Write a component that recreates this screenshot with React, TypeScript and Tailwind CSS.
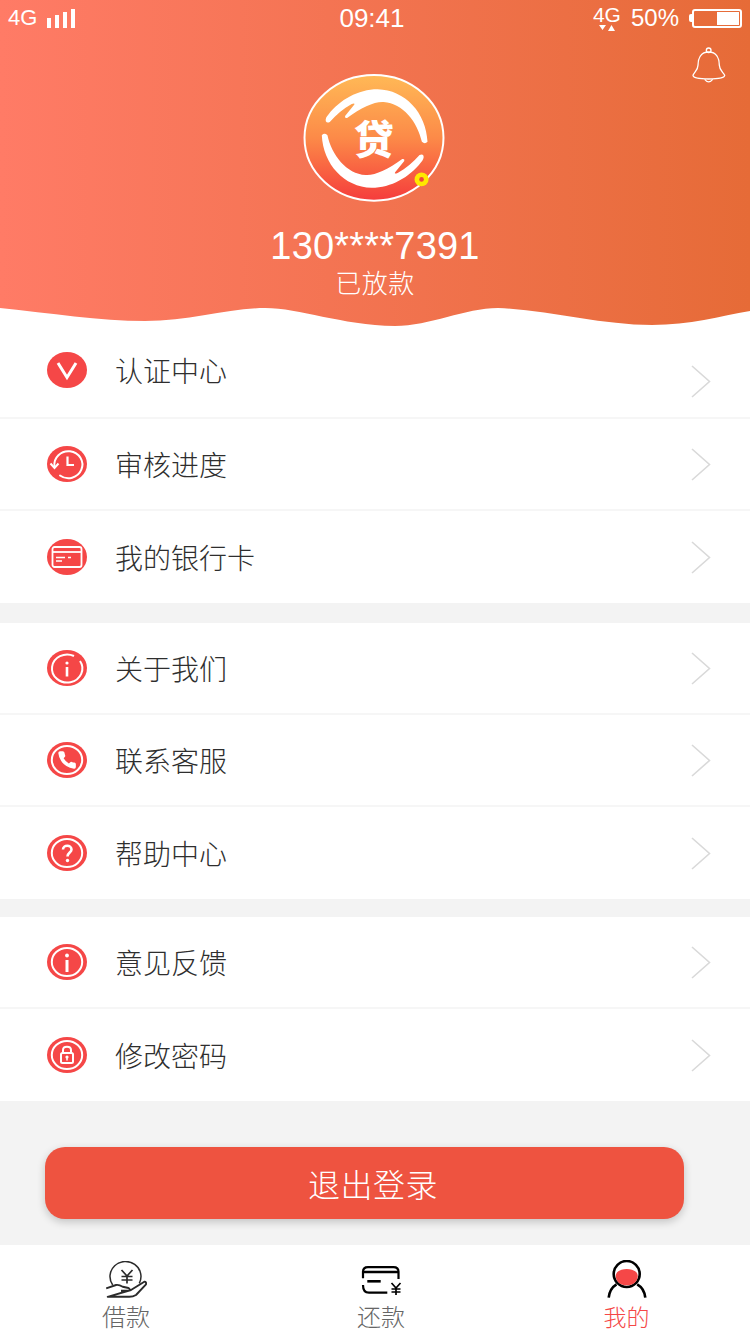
const CJK = "font-['Noto_Sans_CJK_SC','Liberation_Sans',sans-serif]";
const LATIN = "font-['Liberation_Sans','Noto_Sans_CJK_SC',sans-serif]";

function IconBase({ children }: { children: React.ReactNode }) {
  return (
    <svg width="40" height="36" viewBox="0 0 40 36" fill="none" className="shrink-0">
      <ellipse cx="20" cy="18" rx="20" ry="18" fill="#f54747" />
      {children}
    </svg>
  );
}

function VerifyIcon() {
  return (
    <IconBase>
      <path d="M11 11 L20 25.5 L29 11" stroke="#fff" strokeWidth="3" />
    </IconBase>
  );
}

function ProgressIcon() {
  return (
    <IconBase>
      <path d="M7.5 20.5 A14 13.5 0 1 1 13 29.5" stroke="#fff" strokeWidth="2" strokeLinecap="round" />
      <path d="M3.5 17.5 L7.5 22 L11.5 17.5" stroke="#fff" strokeWidth="2" />
      <path d="M20.5 10.5 V19 H27" stroke="#fff" strokeWidth="2.2" />
    </IconBase>
  );
}

function CardIcon() {
  return (
    <IconBase>
      <rect x="5.5" y="8" width="29" height="20" rx="2" stroke="#fff" strokeWidth="1.8" />
      <path d="M5.5 13 H34.5" stroke="#fff" strokeWidth="1.8" />
      <path d="M9 18.5 H18 M9 22 H15 M21 18.5 H24" stroke="#fff" strokeWidth="1.4" />
    </IconBase>
  );
}

function AboutIcon() {
  return (
    <IconBase>
      <path d="M27 6 A15.2 14 0 1 0 33 11" stroke="#fff" strokeWidth="2" />
      <circle cx="20" cy="13" r="1.6" fill="#fff" />
      <path d="M20 17 V26.5" stroke="#fff" strokeWidth="2.6" />
    </IconBase>
  );
}

function FeedbackIcon() {
  return (
    <IconBase>
      <ellipse cx="20" cy="18" rx="15.2" ry="14" stroke="#fff" strokeWidth="2" />
      <circle cx="20" cy="11.5" r="1.9" fill="#fff" />
      <path d="M20 16 V28" stroke="#fff" strokeWidth="3" />
    </IconBase>
  );
}

function PhoneIcon() {
  return (
    <IconBase>
      <ellipse cx="20" cy="18" rx="15.2" ry="14" stroke="#fff" strokeWidth="2" />
      <g transform="translate(9.5 7.5) scale(0.88)">
        <path
          d="M22 16.92v3a2 2 0 0 1-2.18 2 19.79 19.79 0 0 1-8.63-3.07 19.5 19.5 0 0 1-6-6 19.79 19.79 0 0 1-3.07-8.67A2 2 0 0 1 4.11 2h3a2 2 0 0 1 2 1.72 12.84 12.84 0 0 0 .7 2.81 2 2 0 0 1-.45 2.11L8.09 9.91a16 16 0 0 0 6 6l1.27-1.27a2 2 0 0 1 2.11-.45 12.84 12.84 0 0 0 2.81.7A2 2 0 0 1 22 16.92z"
          fill="#fff"
        />
      </g>
    </IconBase>
  );
}

function HelpIcon() {
  return (
    <IconBase>
      <ellipse cx="20" cy="18" rx="15.2" ry="14" stroke="#fff" strokeWidth="2" />
      <path d="M16 14.5 C16 9.5 24.5 9.5 24.5 14.5 C24.5 17.5 20.5 17.5 20.5 21.5" stroke="#fff" strokeWidth="2.6" />
      <circle cx="20.5" cy="25.5" r="1.7" fill="#fff" />
    </IconBase>
  );
}

function LockIcon() {
  return (
    <IconBase>
      <ellipse cx="20" cy="18" rx="15.2" ry="14" stroke="#fff" strokeWidth="2" />
      <path d="M16 16 V13 C16 8.5 24 8.5 24 13 V16" stroke="#fff" strokeWidth="2" />
      <rect x="14" y="16" width="12" height="10" rx="1.5" stroke="#fff" strokeWidth="2" />
      <circle cx="20" cy="20" r="1.6" fill="#fff" />
      <path d="M20 20 V23.5" stroke="#fff" strokeWidth="1.5" />
    </IconBase>
  );
}

function Logo() {
  const hand =
    "M108 170 Q106 160 116 150 C150 106 205 74 264 74 C347 76 410 145 414 232 Q406 240 397 232 C384 172 340 116 282 112 C255 110 215 128 172 160 Q164 162 166 154 L194 120 Q196 114 186 118 C160 132 140 150 120 172 Q112 177 108 170 Z";
  return (
    <svg width="142" height="128" viewBox="40 28 426 385">
      <defs>
        <linearGradient id="logoFill" x1="0" y1="0" x2="0" y2="1">
          <stop offset="0" stopColor="#ffb956" />
          <stop offset="0.5" stopColor="#fc8a48" />
          <stop offset="1" stopColor="#f53c3c" />
        </linearGradient>
      </defs>
      <ellipse cx="253" cy="220" rx="209" ry="189" fill="url(#logoFill)" stroke="#fff" strokeWidth="6" />
      <path d={hand} fill="#fff" />
      <path d={hand} fill="#fff" transform="rotate(180 255 222)" />
      <text
        x="252"
        y="270"
        textAnchor="middle"
        fontSize="120"
        fontWeight="900"
        fill="#fff"
        fontFamily="'Noto Sans CJK SC', sans-serif"
      >
        贷
      </text>
      <circle cx="396" cy="345" r="21" fill="#ffe900" />
      <circle cx="396" cy="345" r="7" fill="#f0483c" />
    </svg>
  );
}

function Bell() {
  return (
    <svg width="34" height="36" viewBox="950 140 102 108" fill="none" stroke="#fff" strokeWidth="4">
      <path d="M1000 155 C976 155 968 175 968 195 C968 210 956 216 953 225 C953 232 970 236 1000 236 C1030 236 1048 232 1048 225 C1044 216 1032 210 1032 195 C1032 175 1024 155 1000 155 Z" />
      <circle cx="1000" cy="150" r="7" />
      <path d="M988 237 Q1000 252 1012 237" />
    </svg>
  );
}

function BorrowIcon() {
  return (
    <svg width="42" height="38" viewBox="0 0 42 38" fill="none" stroke="#2b2b2b" strokeWidth="1.5">
      <path d="M7.7 24 A15.5 15 0 1 1 34.3 22.3" />
      <path d="M16.5 9 L22 15 L27.5 9 M22 15 V22.5 M16.5 15.5 H27.5 M16.5 19 H27.5" strokeWidth="1.7" />
      <path
        d="M1.2 27.3 L11 24 Q14 23.5 17.7 25.7 L23.5 27 Q25.5 28 24 29.7 H16 M26 29 L39.3 20.7 Q41.5 20.5 41 23.3 L31 34 Q28 35.8 24.3 35.8 H2.7 Z"
        strokeWidth="1.9"
        strokeLinejoin="round"
      />
    </svg>
  );
}

function RepayIcon() {
  return (
    <svg width="41" height="30" viewBox="0 0 41 30" fill="none" stroke="#000" strokeWidth="2.2">
      <path d="M2 12.3 V6 Q2 1.2 7 1.2 H32.5 Q37.5 1.2 37.5 6 V13" />
      <path d="M2 6 H37.5" strokeWidth="2.4" />
      <path d="M6.3 15.3 H19.7" strokeWidth="2.6" />
      <path d="M2 19 Q2 26.7 8 26.7 H26.3" />
      <path d="M30.5 17 L35 22 L39.5 17 M35 22 V29 M30.5 23 H39.5 M30.5 26 H39.5" strokeWidth="1.7" />
    </svg>
  );
}

function MineIcon() {
  return (
    <svg width="40" height="38" viewBox="0 0 40 38" fill="none">
      <ellipse cx="19.7" cy="14" rx="13" ry="13" stroke="#000" strokeWidth="2.6" />
      <path d="M8.7 16 C9 6.5 30.5 6.5 30.8 16 C30.5 22 26 25.3 19.7 25.3 C13.5 25.3 9 22 8.7 16 Z" fill="#f54747" />
      <path d="M1.7 37.7 C2.3 31.5 5 27 9.5 24.3 M38.3 37.7 C37.7 31.5 35 27 30.2 24.3" stroke="#000" strokeWidth="2.6" />
    </svg>
  );
}

const groups = [
  [
    { label: "认证中心", icon: <VerifyIcon />, top: true },
    { label: "审核进度", icon: <ProgressIcon /> },
    { label: "我的银行卡", icon: <CardIcon /> },
  ],
  [
    { label: "关于我们", icon: <AboutIcon /> },
    { label: "联系客服", icon: <PhoneIcon /> },
    { label: "帮助中心", icon: <HelpIcon /> },
  ],
  [
    { label: "意见反馈", icon: <FeedbackIcon /> },
    { label: "修改密码", icon: <LockIcon /> },
  ],
];

function Row({ label, icon, top }: { label: string; icon: React.ReactNode; top?: boolean }) {
  return (
    <div className="flex h-[92px] items-center border-b-2 border-[#f6f6f6] bg-white pl-[47px] pr-[39px] last:border-b-0">
      <div className={top ? "mb-[4px] flex flex-1 items-center" : "flex flex-1 items-center"}>
        {icon}
        <span className={`ml-[28px] text-[28px] font-light leading-none text-[#2e2e2e] ${CJK}`}>{label}</span>
      </div>
      <svg
        className={top ? "mt-[18px]" : ""}
        width="20"
        height="33"
        viewBox="0 0 20 33"
        fill="none"
        stroke="#d9d9d9"
        strokeWidth="1.6"
      >
        <path d="M1 1 L18.5 16.5 L1 32" />
      </svg>
    </div>
  );
}

export default function App() {
  return (
    <div className="flex h-[1334px] w-[750px] flex-col overflow-hidden bg-[#f3f3f3]">
      <header className="relative h-[327px] shrink-0 bg-gradient-to-r from-[#ff7b66] to-[#e66b37] text-white">
        <div className={`grid h-[36px] grid-cols-[1fr_auto_1fr] items-center px-[8px] ${LATIN}`}>
          <div className="flex items-center">
            <span className="text-[22px] leading-none">4G</span>
            <div className="ml-[10px] flex h-[20px] items-end gap-[4px]">
              <div className="h-[10px] w-[4px] bg-white" />
              <div className="h-[13px] w-[4px] bg-white" />
              <div className="h-[16px] w-[4px] bg-white" />
              <div className="h-[19px] w-[4px] bg-white" />
            </div>
          </div>
          <span className="mr-[6px] text-[26px] leading-none">09:41</span>
          <div className="flex items-center justify-end">
            <div className="flex flex-col items-center">
              <span className="text-[21px] leading-[20px]">4G</span>
              <svg width="16" height="6" viewBox="0 0 16 6" fill="#fff">
                <path d="M0 0 H7 L3.5 5 Z M9 6 L12.5 0 L16 6 Z" />
              </svg>
            </div>
            <span className="ml-[10px] text-[24px] leading-none">50%</span>
            <div className="ml-[10px] h-[8px] w-[3px] rounded-l-[2px] bg-white" />
            <div className="flex h-[19px] w-[50px] justify-end rounded-[3px] border-2 border-white p-[1px]">
              <div className="w-[22px] bg-white" />
            </div>
          </div>
        </div>
        <div className="flex justify-end pr-[24px] pt-[11px]">
          <Bell />
        </div>
        <div className="-mt-[9px] flex flex-col items-center">
          <div className="mr-[2px]">
            <Logo />
          </div>
          <div className={`mt-[24px] text-[38px] leading-[40px] tracking-[0.2px] ${LATIN}`}>130****7391</div>
          <div className={`mt-[1px] text-[26px] font-light leading-[30px] tracking-[0.5px] ${CJK}`}>已放款</div>
        </div>
        <svg
          className="absolute bottom-0 left-0"
          width="750"
          height="27"
          viewBox="0 300 750 27"
          fill="#fff"
        >
          <path d="M0 308 C50 313 100 321 145 321 C190 321 230 308 265 308 C300 308 340 325 395 326 C430 326 465 308 498 308 C550 310 600 325 652 325 C690 325 720 316 750 311 V327 H0 Z" />
        </svg>
      </header>

      <main className="flex flex-1 flex-col">
        <div className="flex flex-col">
          {groups[0].map((row) => (
            <Row key={row.label} {...row} />
          ))}
        </div>
        <div className="mt-[20px] flex flex-col">
          {groups[1].map((row) => (
            <Row key={row.label} {...row} />
          ))}
        </div>
        <div className="mt-[18px] flex flex-col">
          {groups[2].map((row) => (
            <Row key={row.label} {...row} />
          ))}
        </div>
        <div className="flex flex-1 items-start pl-[45px] pt-[46px]">
          <button
            className={`h-[72px] w-[639px] rounded-[20px] bg-[#ee5340] pl-[17px] text-[32px] font-light tracking-[0.5px] text-white shadow-[0_3px_8px_rgba(0,0,0,0.2)] ${CJK}`}
          >
            退出登录
          </button>
        </div>
      </main>

      <nav className={`grid h-[89px] shrink-0 grid-cols-3 bg-white font-light ${CJK}`}>
        <div className="ml-[2px] flex flex-col items-center pt-[16px] text-[#666]">
          <div className="flex h-[38px] items-center">
            <BorrowIcon />
          </div>
          <span className="mt-[3px] text-[24px] leading-[28px]">借款</span>
        </div>
        <div className="ml-[12px] flex flex-col items-center pt-[17px] text-[#666]">
          <div className="flex h-[38px] items-center">
            <RepayIcon />
          </div>
          <span className="mt-[2px] text-[24px] leading-[28px]">还款</span>
        </div>
        <div className="ml-[3px] flex flex-col items-center pt-[15px] text-[#f54747]">
          <MineIcon />
          <span className="mt-[4px] text-[23px] leading-[28px]">我的</span>
        </div>
      </nav>
    </div>
  );
}
